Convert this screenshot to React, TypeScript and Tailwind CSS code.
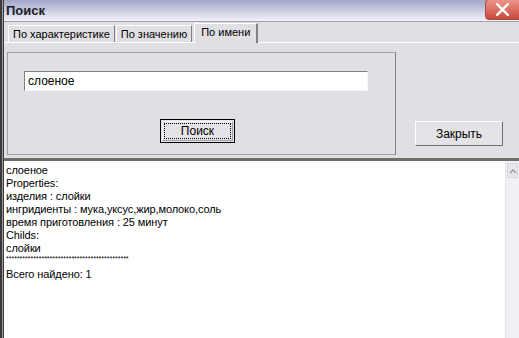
const lines = [
  "слоеное",
  "Properties:",
  "изделия : слойки",
  "ингридиенты : мука,уксус,жир,молоко,соль",
  "время приготовления : 25 минут",
  "Childs:",
  "слойки",
];

export default function App() {
  return (
    <div className="w-[519px] h-[338px] overflow-hidden flex bg-[#e0dfe3] text-[11px] text-black font-['Liberation_Sans',Arial,sans-serif]">
      {/* left window edge */}
      <div className="w-[4px] shrink-0 border-l-2 border-r border-[#3a3a3a] bg-[#9a9aa0]" />

      <div className="flex-1 flex flex-col min-w-0">
        {/* title bar */}
        <div className="h-[22px] shrink-0 flex items-center justify-between bg-gradient-to-b from-[#a3a6c9] to-[#f3f3f9] border-b border-[#a0a0a8]">
          <span className="pl-[2px] font-bold text-[13px] text-[#1c1c28]">Поиск</span>
          <div className="w-[38px] h-[21px] -mr-[4px] -mt-[2px] rounded-l-[4px] bg-gradient-to-b from-[#ec958b] to-[#c9463a] border border-[#a84a40] flex items-center pl-[9px]">
            <svg width="15" height="15" viewBox="0 0 14 14">
              <path d="M2 2 L12 12 M12 2 L2 12" stroke="white" strokeWidth="2.2" strokeLinecap="round" />
            </svg>
          </div>
        </div>

        {/* tabs */}
        <div className="h-[21px] shrink-0 flex items-end pl-[4px] border-b border-[#ffffff]">
          <div className="h-[17px] px-[4px] flex items-center border-t border-l border-white border-r border-r-[#808080] bg-[#e0dfe3]">
            По характеристике
          </div>
          <div className="h-[17px] px-[4px] ml-[1px] flex items-center border-t border-l border-white border-r border-r-[#808080] bg-[#e0dfe3]">
            По значению
          </div>
          <div className="h-[20px] px-[6px] ml-[2px] pb-[3px] flex items-center border-t border-l border-white border-r-2 border-r-[#808080] bg-[#e0dfe3] -mb-px">
            По имени
          </div>
        </div>

        {/* upper area */}
        <div className="h-[115px] shrink-0 flex pt-[9px] pb-[3px]">
          <div className="w-[389px] ml-[3px] border-t border-l border-[#a0a0a4] border-r border-r-[#808084] border-b border-b-[#a0a0a4] flex flex-col">
            <div className="mt-[18px] ml-[16px] w-[344px] h-[20px] shrink-0 bg-white border-t border-l border-[#808080] border-b border-r border-b-[#f4f4f4] border-r-[#f4f4f4] flex items-center pl-[3px] text-[12px]">
              слоеное
            </div>
            <div className="mt-[28px] ml-[152px] w-[75px] h-[24px] shrink-0 border border-black bg-[#e4e3e7] p-[1px]">
              <div className="w-full h-full border-t border-l border-white border-r border-b border-r-[#a0a0a0] border-b-[#a0a0a0] p-[1px]">
                <div className="w-full h-full border border-dotted border-black flex items-center justify-center text-[12px]">
                  Поиск
                </div>
              </div>
            </div>
          </div>
          <div className="flex-1 flex items-end pb-[9px] pl-[19px]">
            <div className="w-[88px] h-[25px] border-t border-l border-white border-r border-b border-r-[#707070] border-b-[#707070] bg-[#e4e3e7] flex items-center justify-center text-[12px]">
              Закрыть
            </div>
          </div>
        </div>

        {/* text area */}
        <div className="flex-1 flex border-t-[3px] border-[#6e6e6a] min-h-0">
          <div className="flex-1 bg-white pl-[2px] pt-[3px] leading-[13px] text-[11px] tracking-[-0.1px]">
            {lines.map((l, i) => (
              <div key={i}>{l}</div>
            ))}
            <div className="h-[13px] text-[7px] leading-[8px] tracking-normal">
              {"*".repeat(45)}
            </div>
            <div>Всего найдено: 1</div>
          </div>
          <div className="w-[14px] bg-[#f1f0f6] border-l border-[#e4e4ea] flex flex-col pt-[2px]">
            <div className="h-[15px] mx-[1px] bg-[#e8e7ea] border border-[#d8d8dc] flex items-center justify-center">
              <svg width="8" height="6" viewBox="0 0 8 6">
                <path d="M1 5 L4 2 L7 5" stroke="#9a9aa4" strokeWidth="1.5" fill="none" />
              </svg>
            </div>
          </div>
        </div>
      </div>
    </div>
  );
}
